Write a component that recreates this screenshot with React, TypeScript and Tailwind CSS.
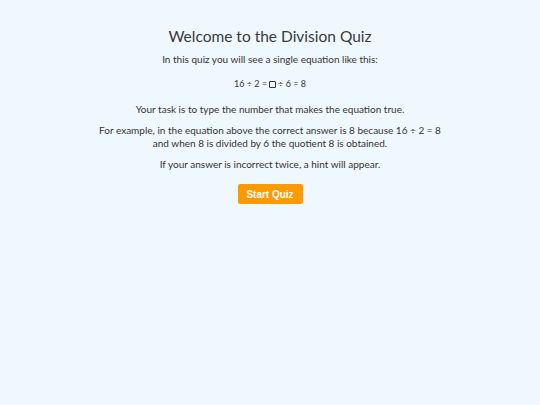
import React from "react";

const App: React.FC = () => {
  return (
    <div className="min-h-[405px] bg-[#f0f8ff] text-[#333] font-['Lato',sans-serif]">
      <div className="flex flex-col items-center pt-[26px] text-center">
        <h1 className="text-[15.5px] leading-[20px] mb-[7px] text-[#3a3a3a]">Welcome to the Division Quiz</h1>
        <p className="text-[10px] leading-[12px] mb-[13px]">In this quiz you will see a single equation like this:</p>
        <p className="text-[9px] leading-[12px] mb-[13px] flex items-center gap-[2px]">
          <span>16 ÷ 2 =</span>
          <span className="inline-block w-[7px] h-[7px] border border-[#333] rounded-[1px]" />
          <span>÷ 6 = 8</span>
        </p>
        <p className="text-[10px] leading-[12px] mb-[9px]">Your task is to type the number that makes the equation true.</p>
        <p className="text-[10px] leading-[13px] mb-[8px]">
          For example, in the equation above the correct answer is 8 because 16 ÷ 2 = 8
          <br />
          and when 8 is divided by 6 the quotient 8 is obtained.
        </p>
        <p className="text-[10px] leading-[12px] mb-[14px]">If your answer is incorrect twice, a hint will appear.</p>
        <button className="bg-[#ff9900] text-white font-bold text-[10px] font-['Liberation_Sans',sans-serif] w-[65px] h-[20px] rounded-[2px]">
          Start Quiz
        </button>
      </div>
    </div>
  );
};

export default App;
